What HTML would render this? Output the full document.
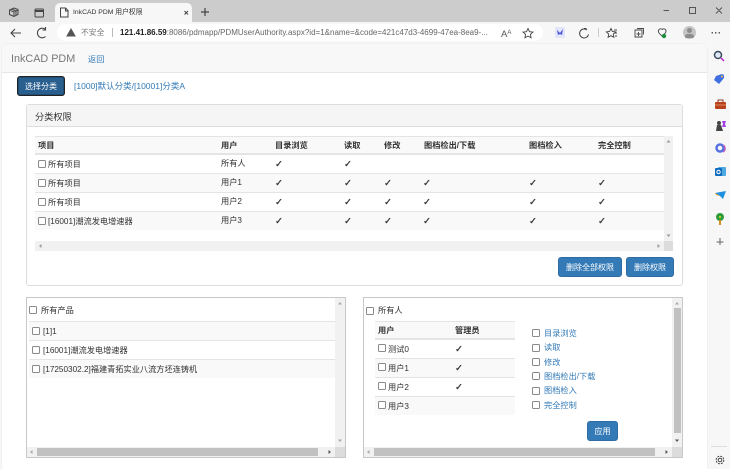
<!DOCTYPE html>
<html><head><meta charset="utf-8"><style>
html,body{margin:0;padding:0;background:#f7f7f7}
body{width:730px;height:469px;overflow:hidden;position:relative}
#w{position:absolute;left:0;top:0;width:730px;height:469px;overflow:hidden;background:#f7f7f7;filter:blur(.3px);font-family:"Liberation Sans","Noto Sans CJK SC",sans-serif;font-size:8.2px;color:#333}
.a{position:absolute}
.t{position:absolute;white-space:nowrap;line-height:12px;margin-top:1px}
.b{font-weight:700}
.l{color:#337ab7}
.c{position:absolute;width:6px;height:6px;border:1px solid #8a8a8a;border-radius:1.5px;background:#fff}
.k{position:absolute;white-space:nowrap;line-height:12px;font-size:9.5px;color:#333;font-family:"DejaVu Sans",sans-serif;-webkit-text-stroke:.3px #333;margin-top:2px}
.btn{position:absolute;background:#337ab7;border:1px solid #2e6da4;border-radius:3px;color:#fff;text-align:center;box-sizing:border-box;font-size:8px}
.sb{position:absolute;background:#f1f1f1}
.th{position:absolute;background:#c1c1c1}
svg{position:absolute;overflow:visible}
</style></head><body><div id="w">
<!-- browser chrome -->
<div class="a" style="left:0;top:0;width:730px;height:22px;background:#cccccc"></div>
<div class="a" style="left:0;top:22px;width:730px;height:22px;background:#f7f7f7"></div>
<div class="a" style="left:55px;top:3px;width:137px;height:20px;background:#f7f7f7;border-radius:5px 5px 0 0"></div>
<div class="a" style="left:57px;top:24px;width:121px;height:17px;background:#fff;border-radius:9px 0 0 9px"></div>
<div class="a" style="left:178px;top:24px;width:365px;height:17px;background:#fff;border-radius:0 9px 9px 0"></div>
<svg style="left:0;top:0" width="730" height="44" fill="none" stroke="#444" stroke-width="1">
<path d="M14 8l4 1.500v5l-4 2-4.500-2v-4.500zM9.500 10l4.500 2 4-2M14 12v4.500M11.500 9l4.500 2v4"/>
<rect x="35" y="9" width="8.500" height="8" rx="1"/><path d="M35 11h8.500" stroke-width="2"/>
<path d="M60.500 8h5l2.500 2.500v6.500h-7.500zM65.500 8v3h2.500"/>
<path d="M184.500 11l3.500 3.500M188 11l-3.500 3.500"/>
<path d="M205 8v8M201 12h8" stroke-width="1.200"/>
<path d="M663.500 10.500h5.500M689.500 7.500h6v6h-6zM716 7.500l6 6M722 7.500l-6 6" stroke="#555"/>
<path d="M11 33h10M15 29l-4 4 4 4" stroke-width="1.100"/>
<path d="M45.500 29.500a4.800 4.800 0 1 0 0 7M45.500 27v3h-3" stroke-width="1.100"/>
<path d="M71 29l4 7h-8z" fill="#555" stroke="#555"/>
<path d="M112.500 28v9" stroke="#bbb"/>
<path d="M528 28.500l1.500 3.200 3.500.4-2.600 2.300.7 3.400-3.100-1.700-3.100 1.700.7-3.400-2.600-2.300 3.500-.4z" stroke-width=".9"/>
<path d="M611 28.500l1.400 3 3.300.4-2.400 2.200.6 3.200-2.900-1.600-2.900 1.600.6-3.200-2.400-2.200 3.300-.4zM614 30h3M615 33h2M615 36h2" stroke-width=".9"/>
<path d="M635 30h7v7h-7zM638.500 32v4M636.500 34h4M637 28.500h6.500v6" stroke-width=".9"/>
<path d="M659 29.500c1.800-1.500 3.200 0 3.200 0s1.500-1.500 3.300 0c1.500 2 0 4-3.300 6.500-3.300-2.500-4.800-4.500-3.200-6.500z" stroke-width=".9"/>
<path d="M587 30a4.500 4.500 0 1 0 1.500 4.500M584 28.500l2.500 0" stroke-width="1"/><path d="M598.500 28v9" stroke="#ccc"/>
</svg>
<svg style="left:555px;top:27px" width="12" height="12"><rect x="0" y="0" width="10" height="11" fill="#e3e6fb" rx="1"/><path d="M2 3l3 3 3-4-1 6-2-1-2 1z" fill="#4a55d8"/></svg>
<svg style="left:660px;top:33px" width="8" height="8"><circle cx="4" cy="3" r="2.200" fill="#1e8e3e"/></svg>
<div class="a" style="left:683px;top:26px;width:13px;height:13px;border-radius:50%;background:#c4c4c4"></div>
<div class="a" style="left:687px;top:28px;width:5px;height:5px;border-radius:50%;background:#8d8d8d"></div>
<div class="a" style="left:685px;top:34px;width:9px;height:4px;border-radius:4px 4px 2px 2px;background:#8d8d8d"></div>
<div class="t" style="left:73px;top:6px;font-size:6.800px;color:#333">InkCAD PDM 用户权限</div>
<div class="t" style="left:81px;top:26px;font-size:7.800px;color:#777">不安全</div>
<div class="t" style="left:120px;top:26px;font-size:8px;color:#666"><span style="color:#222;font-weight:700">121.41.86.59</span>:8086/pdmapp/PDMUserAuthority.aspx?id=1&amp;name=&amp;code=421c47d3-4699-47ea-8ea9-...</div>
<div class="t" style="left:501px;top:26px;font-size:9.500px;color:#555">A<span style="font-size:6px;vertical-align:3px">A</span></div>
<div class="t" style="left:711px;top:26px;font-size:9px;color:#333;font-weight:700;letter-spacing:.5px">···</div>
<!-- content -->
<div class="a" style="left:2px;top:44px;width:705px;height:425px;background:#fff;border-radius:5px 5px 0 0;box-shadow:0 0 1px #ccc"></div>
<div class="a" style="left:2px;top:44px;width:705px;height:29px;background:#f8f8f8;border-bottom:1px solid #e7e7e7;border-radius:5px 5px 0 0;box-sizing:border-box"></div>
<div class="t" style="left:11px;top:52px;font-size:10.800px;color:#777">InkCAD PDM</div>
<div class="t l" style="left:88px;top:53px">返回</div>
<!-- select btn -->
<div class="btn" style="left:18px;top:77px;width:46px;height:18px;line-height:16px;background:#285f8f;border:1px solid #204d74;border-radius:2px;box-shadow:0 0 0 1px #222"></div>
<div class="t" style="left:25px;top:80px;color:#fff;font-size:8px">选择分类</div>
<div class="t l" style="left:74px;top:79px;font-size:8.500px">[1000]默认分类/[10001]分类A</div>
<!-- panel -->
<div class="a" style="left:26px;top:104px;width:657px;height:182px;border:1px solid #ddd;border-radius:3px;box-sizing:border-box;background:#fff"></div>
<div class="a" style="left:27px;top:105px;width:655px;height:22px;background:#f5f5f5;border-bottom:1px solid #ddd;box-sizing:border-box"></div>
<div class="t" style="left:35px;top:110px;font-size:9.200px;color:#333">分类权限</div>
<!-- table -->
<div class="a" style="left:35px;top:136px;width:629px;height:19px;background:#f9f9f9;border-top:1px solid #e4e4e4;border-bottom:2px solid #e4e4e4;box-sizing:border-box"></div>
<div class="a" style="left:35px;top:173px;width:629px;height:19px;background:#f9f9f9;border-top:1px solid #e4e4e4;box-sizing:border-box"></div>
<div class="a" style="left:35px;top:192px;width:629px;height:19px;border-top:1px solid #e4e4e4;box-sizing:border-box"></div>
<div class="a" style="left:35px;top:211px;width:629px;height:19px;background:#f9f9f9;border-top:1px solid #e4e4e4;box-sizing:border-box"></div>
<div class="t b" style="left:38px;top:139px">项目</div><div class="t b" style="left:221px;top:139px">用户</div><div class="t b" style="left:275px;top:139px">目录浏览</div><div class="t b" style="left:344px;top:139px">读取</div><div class="t b" style="left:384px;top:139px">修改</div><div class="t b" style="left:424px;top:139px">图档检出/下载</div><div class="t b" style="left:529px;top:139px">图档检入</div><div class="t b" style="left:598px;top:139px">完全控制</div>
<div class="c" style="left:38px;top:160px"></div><div class="t" style="left:48px;top:158px">所有项目</div><div class="t" style="left:221px;top:157px">所有人</div>
<div class="c" style="left:38px;top:179px"></div><div class="t" style="left:48px;top:177px">所有项目</div><div class="t" style="left:221px;top:176px">用户1</div>
<div class="c" style="left:38px;top:198px"></div><div class="t" style="left:48px;top:196px">所有项目</div><div class="t" style="left:221px;top:195px">用户2</div>
<div class="c" style="left:38px;top:217px"></div><div class="t" style="left:48px;top:215px">[16001]潮流发电增速器</div><div class="t" style="left:221px;top:214px">用户3</div>
<div class="k" style="left:275px;top:157px">✓</div><div class="k" style="left:344px;top:157px">✓</div>
<div class="k" style="left:275px;top:176px">✓</div><div class="k" style="left:344px;top:176px">✓</div><div class="k" style="left:384px;top:176px">✓</div><div class="k" style="left:423px;top:176px">✓</div><div class="k" style="left:529px;top:176px">✓</div><div class="k" style="left:598px;top:176px">✓</div>
<div class="k" style="left:275px;top:195px">✓</div><div class="k" style="left:344px;top:195px">✓</div><div class="k" style="left:384px;top:195px">✓</div><div class="k" style="left:423px;top:195px">✓</div><div class="k" style="left:529px;top:195px">✓</div><div class="k" style="left:598px;top:195px">✓</div>
<div class="k" style="left:275px;top:214px">✓</div><div class="k" style="left:344px;top:214px">✓</div><div class="k" style="left:384px;top:214px">✓</div><div class="k" style="left:423px;top:214px">✓</div><div class="k" style="left:529px;top:214px">✓</div><div class="k" style="left:598px;top:214px">✓</div>
<div class="sb" style="left:664px;top:136px;width:9px;height:105px"></div>
<div class="sb" style="left:35px;top:241px;width:629px;height:10px"></div>
<div class="a" style="left:664px;top:241px;width:9px;height:10px;background:#dcdcdc"></div>
<svg style="left:0;top:0" width="730" height="469" fill="#999">
<path d="M668.500 140l2 2.500h-4zM668.500 237l2-2.500h-4zM39 246l2.500-2v4zM660 246l-2.500-2v4z"/>
</svg>
<div class="btn" style="left:558px;top:257px;width:64px;height:20px;line-height:19px">删除全部权限</div>
<div class="btn" style="left:626px;top:257px;width:48px;height:20px;line-height:19px">删除权限</div>
<!-- bottom left -->
<div class="a" style="left:26px;top:297px;width:320px;height:161px;border:1px solid #c8c8c8;box-sizing:border-box;background:#fff"></div>
<div class="sb" style="left:335px;top:298px;width:10px;height:159px"></div>
<div class="sb" style="left:27px;top:447px;width:318px;height:10px"></div>
<div class="th" style="left:37px;top:448px;width:281px;height:8px"></div>
<div class="a" style="left:335px;top:447px;width:10px;height:10px;background:#dcdcdc"></div>
<div class="c" style="left:29px;top:306px"></div><div class="t" style="left:41px;top:304px">所有产品</div>
<div class="a" style="left:29px;top:321px;width:306px;height:19px;background:#f9f9f9;border-top:1px solid #e4e4e4;box-sizing:border-box"></div>
<div class="a" style="left:29px;top:340px;width:306px;height:19px;border-top:1px solid #e4e4e4;box-sizing:border-box"></div>
<div class="a" style="left:29px;top:359px;width:306px;height:19px;background:#f9f9f9;border-top:1px solid #e4e4e4;box-sizing:border-box"></div>
<div class="c" style="left:32px;top:327px"></div><div class="t" style="left:43px;top:325px">[1]1</div>
<div class="c" style="left:32px;top:346px"></div><div class="t" style="left:43px;top:344px">[16001]潮流发电增速器</div>
<div class="c" style="left:32px;top:365px"></div><div class="t" style="left:43px;top:363px">[17250302.2]福建青拓实业八流方坯连铸机</div>
<!-- bottom right -->
<div class="a" style="left:363px;top:297px;width:320px;height:161px;border:1px solid #c8c8c8;box-sizing:border-box;background:#fff"></div>
<div class="sb" style="left:672px;top:298px;width:10px;height:159px"></div>
<div class="th" style="left:674px;top:308px;width:7px;height:125px"></div>
<div class="sb" style="left:364px;top:447px;width:318px;height:10px"></div>
<div class="th" style="left:374px;top:448px;width:281px;height:8px"></div>
<div class="a" style="left:672px;top:447px;width:10px;height:10px;background:#dcdcdc"></div>
<div class="c" style="left:366px;top:307px"></div><div class="t" style="left:378px;top:304px">所有人</div>
<div class="a" style="left:375px;top:321px;width:140px;height:19px;background:#f9f9f9;border-top:1px solid #e4e4e4;border-bottom:2px solid #e4e4e4;box-sizing:border-box"></div>
<div class="a" style="left:375px;top:358px;width:140px;height:19px;background:#f9f9f9;border-top:1px solid #e4e4e4;box-sizing:border-box"></div>
<div class="a" style="left:375px;top:377px;width:140px;height:1px;background:#e4e4e4"></div>
<div class="a" style="left:375px;top:396px;width:140px;height:19px;background:#f9f9f9;border-top:1px solid #e4e4e4;box-sizing:border-box"></div>
<div class="t b" style="left:378px;top:324px">用户</div><div class="t b" style="left:455px;top:324px">管理员</div>
<div class="c" style="left:378px;top:344px"></div><div class="t" style="left:388px;top:343px">测试0</div><div class="k" style="left:455px;top:342px">✓</div>
<div class="c" style="left:378px;top:363px"></div><div class="t" style="left:388px;top:362px">用户1</div><div class="k" style="left:455px;top:361px">✓</div>
<div class="c" style="left:378px;top:382px"></div><div class="t" style="left:388px;top:381px">用户2</div><div class="k" style="left:455px;top:380px">✓</div>
<div class="c" style="left:378px;top:401px"></div><div class="t" style="left:388px;top:400px">用户3</div>
<div class="c" style="left:532px;top:329px"></div><div class="t l" style="left:544px;top:327px">目录浏览</div>
<div class="c" style="left:532px;top:344px"></div><div class="t l" style="left:544px;top:341px">读取</div>
<div class="c" style="left:532px;top:358px"></div><div class="t l" style="left:544px;top:356px">修改</div>
<div class="c" style="left:532px;top:372px"></div><div class="t l" style="left:544px;top:370px">图档检出/下载</div>
<div class="c" style="left:532px;top:387px"></div><div class="t l" style="left:544px;top:384px">图档检入</div>
<div class="c" style="left:532px;top:401px"></div><div class="t l" style="left:544px;top:399px">完全控制</div>
<div class="btn" style="left:587px;top:421px;width:31px;height:20px;line-height:19px">应用</div>
<svg style="left:0;top:0" width="730" height="469" fill="#888">
<path d="M340 302l2 2.500h-4zM340 442l2-2.500h-4zM30 452l2.500-2v4z" fill="#aaa"/>
<path d="M331 452l-2.500-2v4z" fill="#555"/>
<path d="M677 302l2 2.500h-4z" fill="#aaa"/>
<path d="M677 442l2-2.500h-4zM668 452l-2.500-2v4z" fill="#555"/>
<path d="M367 452l2.500-2v4z" fill="#aaa"/>
</svg>
<!-- sidebar icons -->
<svg style="left:0;top:0" width="730" height="469" fill="none">
<circle cx="718" cy="55" r="3.500" stroke="#3b4a5c" stroke-width="1.500" fill="#dfe9f5"/><path d="M721 58l3 3" stroke="#c020d0" stroke-width="1.500"/>
<path d="M716 76l6-2 2 1 0 3-5 6-5-4z" fill="#3f6fe0"/><circle cx="722" cy="76.500" r="1" fill="#f5c242"/>
<rect x="715" y="102" width="11" height="7" rx="1" fill="#b8401c"/><path d="M718 102v-2h5v2" stroke="#8a3a20"/><path d="M715 105h11" stroke="#e08a60"/>
<circle cx="719" cy="123" r="2" fill="#444"/><path d="M716 131l1-6h4l1 3 1 3z" fill="#444"/><path d="M722 121h4l-1 3 1 3h-4l1-3z" fill="#a040e0"/>
<circle cx="720" cy="148" r="3.500" stroke="#5570e0" stroke-width="2.500"/><path d="M723 145a4 4 0 0 1 0 7" stroke="#c060c0" stroke-width="1.500"/>
<rect x="718" y="167" width="8" height="9" rx="1" fill="#50a8e0"/><rect x="715" y="168" width="7" height="8" rx="1" fill="#0f6cbd"/><circle cx="718.500" cy="172" r="1.700" stroke="#fff"/>
<path d="M715 193l11-2-3 8-3-3z" fill="#1e90e0"/><path d="M715 193l5 3 0 0-4-1z" fill="#f0a020"/>
<circle cx="720" cy="217" r="4" fill="#2e9e3a"/><path d="M720 220v5" stroke="#d89020" stroke-width="2"/><circle cx="720" cy="217" r="1" fill="#f0d040"/>
<path d="M720 238v7M716.500 242h7" stroke="#666"/>
<path d="M711 446.500h16" stroke="#ddd"/>
<circle cx="720" cy="460" r="1.800" stroke="#444"/><circle cx="720" cy="460" r="3.800" stroke="#444" stroke-dasharray="2 1"/>
</svg>
</div></body></html>
